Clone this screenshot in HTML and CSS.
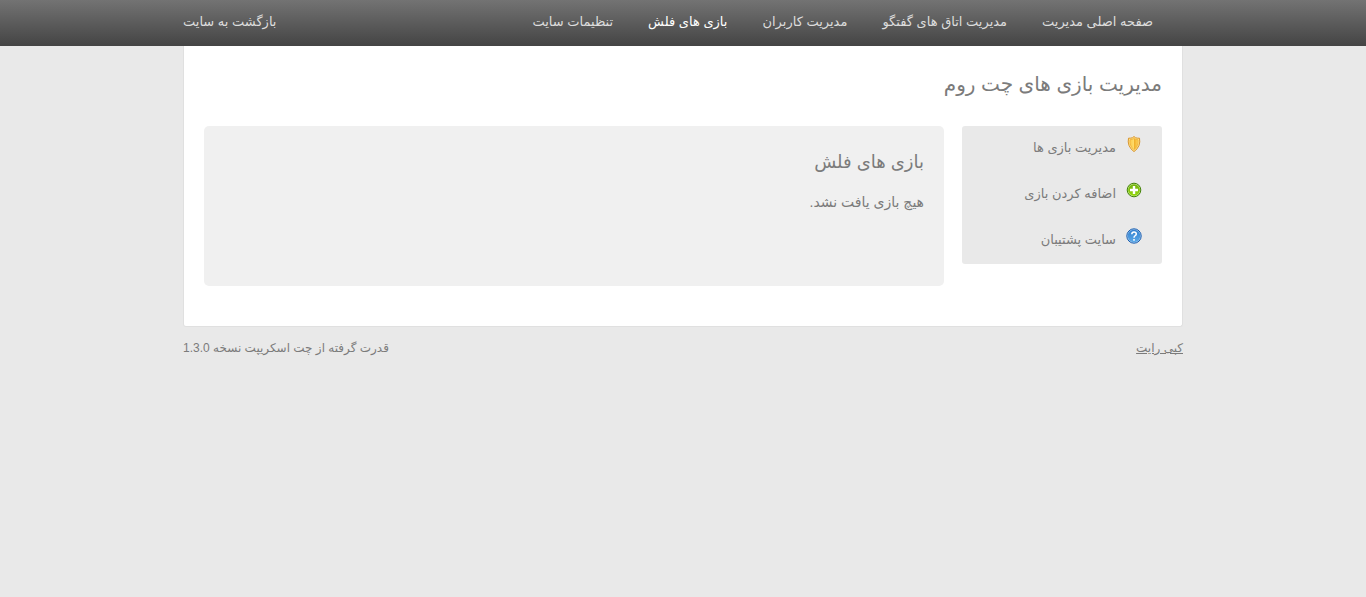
FILE: index.html
```
<!doctype html>
<html lang="fa" dir="rtl">

  <head>
    <meta charset="utf-8">
    <title>مدیریت بازی های چت روم</title>
    <link rel="stylesheet" href="styles.css">
  </head>

  <body>
    <header class="topbar">
      <nav class="wrap nav">
        <ul class="menu">
          <li><a href="#">صفحه اصلی مدیریت</a></li>
          <li><a href="#">مدیریت اتاق های گفتگو</a></li>
          <li><a href="#">مدیریت کاربران</a></li>
          <li><a href="#" class="current">بازی های فلش</a></li>
          <li><a href="#">تنظیمات سایت</a></li>
        </ul>
        <a href="#">بازگشت به سایت</a>
      </nav>
    </header>

    <main class="wrap page">
      <h1>مدیریت بازی های چت روم</h1>
      <div class="columns">
        <ul class="sidebar">
          <li>
            <a href="#">
              <svg class="icon" viewBox="0 0 16 16" aria-hidden="true">
                <defs>
                  <linearGradient id="gold" x1="0" y1="0" x2="1" y2="0">
                    <stop offset="0" stop-color="#fbc94a"/>
                    <stop offset="0.5" stop-color="#ffdd6e"/>
                    <stop offset="0.5" stop-color="#f0ad28"/>
                    <stop offset="1" stop-color="#ffd55c"/>
                  </linearGradient>
                </defs>
                <path d="M8 .5 9.6 1.8Q11.5 2.3 13.5 2.2 14.3 6 13 9.5 11.5 13.2 8 15.6 4.5 13.2 3 9.5 1.7 6 2.5 2.2 4.5 2.3 6.4 1.8Z" fill="#ffe489" stroke="#d9942e"/>
                <path d="M8 2.5Q10 3.7 12 3.7 12.4 6.5 11.5 9 10.5 11.8 8 13.7 5.5 11.8 4.5 9 3.6 6.5 4 3.7 6 3.7 8 2.5Z" fill="url(#gold)" stroke="#efae38" stroke-width=".8"/>
              </svg>
              <span>مدیریت بازی ها</span>
            </a>
          </li>
          <li>
            <a href="#">
              <svg class="icon" viewBox="0 0 16 16" aria-hidden="true">
                <defs>
                  <linearGradient id="green" x1="0" y1="0" x2="0" y2="1">
                    <stop offset="0" stop-color="#72b010"/>
                    <stop offset="1" stop-color="#93d80a"/>
                  </linearGradient>
                </defs>
                <circle cx="8" cy="8" r="6.8" fill="#c2e58a" stroke="#428208"/>
                <circle cx="8" cy="8" r="5.8" fill="url(#green)"/>
                <path d="M8 4v8M4 8h8" stroke="#fff" stroke-width="2.4"/>
              </svg>
              <span>اضافه کردن بازی</span>
            </a>
          </li>
          <li>
            <a href="#">
              <svg class="icon" viewBox="0 0 16 16" aria-hidden="true">
                <defs>
                  <linearGradient id="blue" x1="0" y1="0" x2="0" y2="1">
                    <stop offset="0" stop-color="#3380cf"/>
                    <stop offset="1" stop-color="#5ba9e8"/>
                  </linearGradient>
                </defs>
                <circle cx="8" cy="8" r="7.2" fill="#a9cdf0" stroke="#1b5fb0"/>
                <circle cx="8" cy="8" r="6.2" fill="url(#blue)"/>
                <path d="M5.8 6.2Q5.8 3.9 8 3.9T10.3 6Q10.3 7 9.2 7.7 8 8.4 8 9.8M8 11v1.7" fill="none" stroke="#fff" stroke-width="1.5"/>
              </svg>
              <span>سایت پشتیبان</span>
            </a>
          </li>
        </ul>
        <section class="content">
          <h2>بازی های فلش</h2>
          <p>هیچ بازی یافت نشد.</p>
        </section>
      </div>
    </main>

    <footer class="wrap footer">
      <a href="#">کپی رایت</a>
      <span>قدرت گرفته از چت اسکریپت نسخه 1.3.0</span>
    </footer>
  </body>
</html>
```

FILE: styles.css
```
* {
    box-sizing: border-box;
}

body {
    margin: 0;
    background: #e9e9e9;
    color: #7b7b7b;
    font-family: "Liberation Sans", "DejaVu Sans", sans-serif;
    font-size: 13px;
    line-height: 20px;
}

ul {
    list-style: none;
    margin: 0;
    padding: 0;
}

h1, h2, p {
    margin: 0;
    font-weight: normal;
}

.wrap {
    max-width: 1000px;
    margin: 0 auto;
}

.topbar {
    background: linear-gradient(#737373, #444);
}

.nav {
    display: flex;
    justify-content: space-between;
    align-items: center;
    height: 46px;
    padding-bottom: 2px;
}

.nav a {
    color: #ddd;
    text-decoration: none;
}

.nav .current {
    color: #fff;
}

.menu {
    display: flex;
    gap: 35px;
    padding-right: 30px;
}

.page {
    padding: 18px 20px 40px;
    background: #fff;
    border: 1px solid #e0e0e0;
    border-top: 0;
    border-radius: 0 0 3px 3px;
}

h1 {
    margin-bottom: 22px;
    font-size: 20px;
    line-height: 40px;
}

.columns {
    display: flex;
    align-items: flex-start;
    gap: 18px;
}

.sidebar {
    width: 200px;
    background: #e9e9e9;
    border-radius: 3px;
}

.sidebar a {
    display: flex;
    gap: 10px;
    height: 46px;
    padding: 10px 20px;
    color: #7b7b7b;
    line-height: 24px;
    text-decoration: none;
}

.icon {
    width: 16px;
    height: 16px;
}

.content {
    flex: 1;
    min-height: 160px;
    padding: 20px;
    background: #f0f0f0;
    border-radius: 5px;
}

h2 {
    margin-bottom: 10px;
    font-size: 18px;
    line-height: 32px;
}

.content p {
    font-size: 14px;
    line-height: 28px;
}

.footer {
    display: flex;
    justify-content: space-between;
    padding: 11px 0;
    font-size: 12px;
}

.footer a {
    color: #7b7b7b;
}
```
